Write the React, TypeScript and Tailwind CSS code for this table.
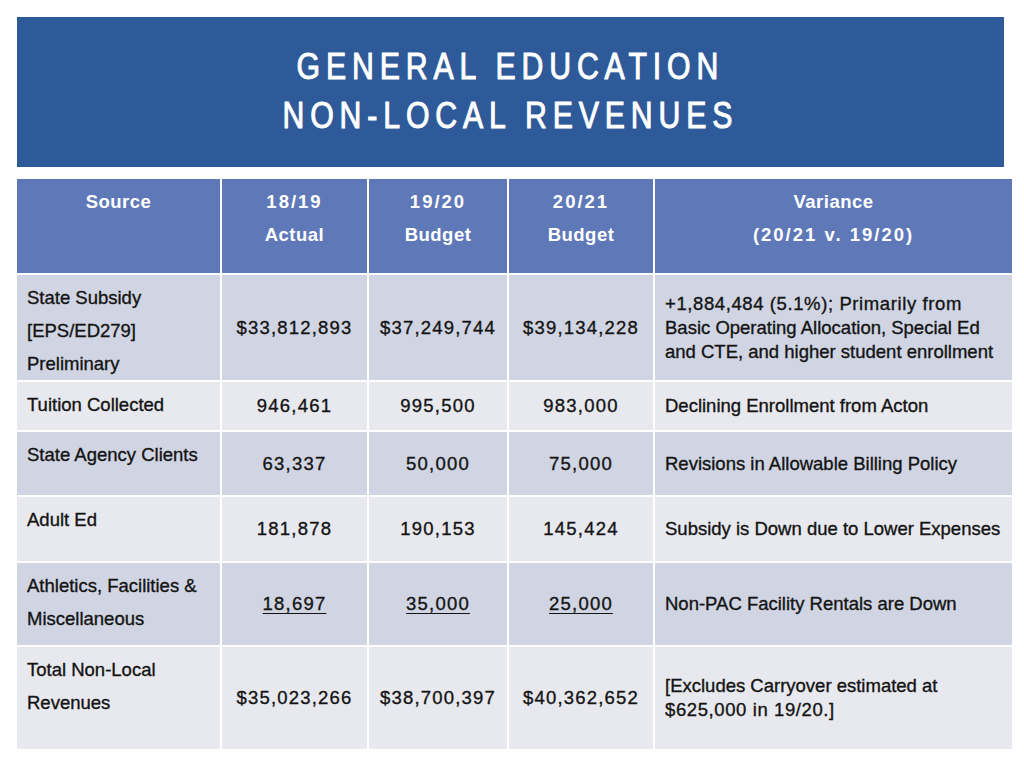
import type { ReactNode } from 'react';

type Row = {
  source: string[];
  actual: string;
  budget1920: string;
  budget2021: string;
  variance: string[];
  height: string;
  dark: boolean;
  underline?: boolean;
};

const rows: Row[] = [
  {
    source: ['State Subsidy', '[EPS/ED279]', 'Preliminary'],
    actual: '$33,812,893',
    budget1920: '$37,249,744',
    budget2021: '$39,134,228',
    variance: [
      '+1,884,484 (5.1%); Primarily from',
      'Basic Operating Allocation, Special Ed',
      'and CTE, and higher student enrollment',
    ],
    height: 'h-[105px]',
    dark: true,
  },
  {
    source: ['Tuition Collected'],
    actual: '946,461',
    budget1920: '995,500',
    budget2021: '983,000',
    variance: ['Declining Enrollment from Acton'],
    height: 'h-[48px]',
    dark: false,
  },
  {
    source: ['State Agency Clients'],
    actual: '63,337',
    budget1920: '50,000',
    budget2021: '75,000',
    variance: ['Revisions in Allowable Billing Policy'],
    height: 'h-[63px]',
    dark: true,
  },
  {
    source: ['Adult Ed'],
    actual: '181,878',
    budget1920: '190,153',
    budget2021: '145,424',
    variance: ['Subsidy is Down due to Lower Expenses'],
    height: 'h-[64px]',
    dark: false,
  },
  {
    source: ['Athletics, Facilities &', 'Miscellaneous'],
    actual: '18,697',
    budget1920: '35,000',
    budget2021: '25,000',
    variance: ['Non-PAC Facility Rentals are Down'],
    height: 'h-[82px]',
    dark: true,
    underline: true,
  },
  {
    source: ['Total Non-Local', 'Revenues'],
    actual: '$35,023,266',
    budget1920: '$38,700,397',
    budget2021: '$40,362,652',
    variance: ['[Excludes Carryover estimated at', '$625,000 in 19/20.]'],
    height: 'h-[102px]',
    dark: false,
  },
];

const hasDigits = (s: string) => /\d/.test(s);

const HeaderCell = ({ lines }: { lines: string[] }) => (
  <div className="h-[94px] bg-[#5f79b8] pt-[6px] text-center text-[18.5px] font-bold leading-[33px] text-white [-webkit-text-stroke:0px]">
    {lines.map((l) => (
      <div key={l} className={hasDigits(l) ? 'tracking-[2px]' : 'tracking-[0.5px]'}>
        {l}
      </div>
    ))}
  </div>
);

const Cell = ({ dark, children, className }: { dark: boolean; children: ReactNode; className?: string }) => (
  <div className={`${dark ? 'bg-[#d1d5e3]' : 'bg-[#e8e9ef]'} ${className ?? ''}`}>{children}</div>
);

export default function App() {
  return (
    <div
      className="h-[768px] w-[1024px] bg-white pl-[17px] pt-[17px]"
      style={{ fontFamily: '"Liberation Sans", Arial, sans-serif' }}
    >
      {/* title banner */}
      <div className="flex h-[150px] w-[987px] flex-col items-center justify-center bg-[#2e5a99] pb-[2px] text-white">
        <div className="scale-x-[0.84] text-center text-[36px] leading-[49px] tracking-[7px] [-webkit-text-stroke:1px_#fff]">
          <div>GENERAL EDUCATION</div>
          <div>NON-LOCAL REVENUES</div>
        </div>
      </div>

      <div className="mt-[12px] grid w-[995px] grid-cols-[203px_145px_138px_144px_357px] gap-[2px] bg-white text-[18.5px] text-[#141414] [-webkit-text-stroke:0.35px_#141414]">
        <HeaderCell lines={['Source']} />
        <HeaderCell lines={['18/19', 'Actual']} />
        <HeaderCell lines={['19/20', 'Budget']} />
        <HeaderCell lines={['20/21', 'Budget']} />
        <HeaderCell lines={['Variance', '(20/21 v. 19/20)']} />

        {rows.map((r) => (
          <div key={r.source[0]} className="contents">
            <Cell dark={r.dark} className={`${r.height} pl-[10px] pt-[6px] leading-[33px]`}>
              {r.source.map((s) => (
                <div key={s}>{s}</div>
              ))}
            </Cell>
            {[r.actual, r.budget1920, r.budget2021].map((v, i) => (
              <Cell key={i} dark={r.dark} className="flex items-center justify-center">
                <span className={`tracking-[1.2px] ${r.underline ? 'underline underline-offset-[3px]' : ''}`}>{v}</span>
              </Cell>
            ))}
            <Cell dark={r.dark} className="flex flex-col justify-center pl-[10px] leading-[24px]">
              {r.variance.map((s) => (
                <div key={s} className={hasDigits(s) ? 'tracking-[0.6px]' : ''}>
                  {s}
                </div>
              ))}
            </Cell>
          </div>
        ))}
      </div>
    </div>
  );
}
